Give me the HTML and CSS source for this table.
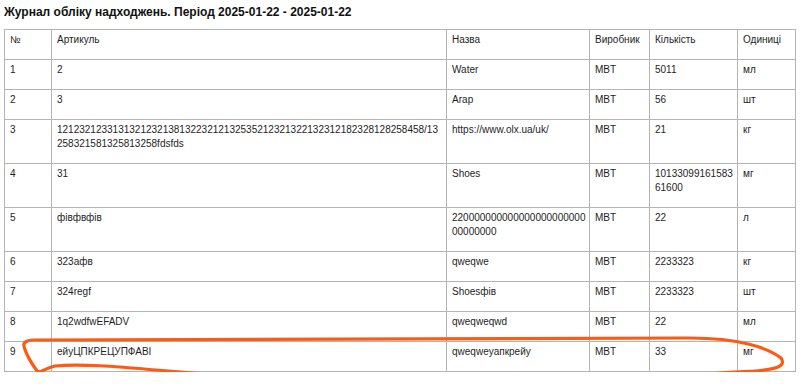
FILE: index.html
```html
<!DOCTYPE html>
<html lang="uk">
<head>
<meta charset="utf-8">
<title>Журнал обліку надходжень</title>
<link rel="stylesheet" href="styles.css">
</head>
<body>
<div class="page">
  <h1 class="title">Журнал обліку надходжень. Період 2025-01-22 - 2025-01-22</h1>
  <table class="journal">
    <colgroup>
      <col class="c-no"><col class="c-art"><col class="c-name"><col class="c-maker"><col class="c-qty"><col class="c-unit">
    </colgroup>
    <thead>
      <tr><th>№</th><th>Артикуль</th><th>Назва</th><th>Виробник</th><th>Кількість</th><th>Одиниці</th></tr>
    </thead>
    <tbody>
      <tr><td>1</td><td>2</td><td>Water</td><td>MBT</td><td>5011</td><td>мл</td></tr>
      <tr><td>2</td><td>3</td><td>Агар</td><td>MBT</td><td>56</td><td>шт</td></tr>
      <tr><td>3</td><td>121232123313132123213813223212132535212321322132312182328128258458/13258321581325813258fdsfds</td><td>https://www.olx.ua/uk/</td><td>MBT</td><td>21</td><td>кг</td></tr>
      <tr><td>4</td><td>31</td><td>Shoes</td><td>MBT</td><td>1013309916158361600</td><td>мг</td></tr>
      <tr><td>5</td><td>фівфвфів</td><td>22000000000000000000000000000000</td><td>MBT</td><td>22</td><td>л</td></tr>
      <tr><td>6</td><td>323афв</td><td>qweqwe</td><td>MBT</td><td>2233323</td><td>кг</td></tr>
      <tr><td>7</td><td>324regf</td><td>Shoesфів</td><td>MBT</td><td>2233323</td><td>шт</td></tr>
      <tr><td>8</td><td>1q2wdfwEFADV</td><td>qweqweqwd</td><td>MBT</td><td>22</td><td>мл</td></tr>
      <tr><td>9</td><td>ейуЦПКРЕЦУПФАВІ</td><td>qweqweyапкрейу</td><td>MBT</td><td>33</td><td>мг</td></tr>
    </tbody>
  </table>
</div>
<svg class="scribble" width="803" height="384" viewBox="0 0 803 384" aria-hidden="true">
  <path d="M 33 340 C 120 338, 400 340, 690 338 C 740 338, 768 348, 781 358 C 788 368, 770 371, 735 372 C 712 373, 696 376, 680 378 C 600 382, 400 382, 250 377 C 160 372, 95 362, 55 366 C 46 368, 42 372, 38 372 C 32 365, 25 352, 24 346 C 23 342, 28 340, 33 340" fill="none" stroke="#ff5a14" stroke-width="3.2" stroke-linecap="round" stroke-linejoin="round"/>
</svg>
</body>
</html>
```

FILE: styles.css
```css
html, body {
  margin: 0;
  padding: 0;
  background: #ffffff;
}

body {
  position: relative;
  font-family: "Liberation Sans", Arial, sans-serif;
  color: #1e1e1e;
}

.page {
  padding: 5px 0 0 4px;
}

.title {
  margin: 0 0 10px 0;
  font-size: 12px;
  line-height: 14px;
  font-weight: bold;
  color: #111;
}

.journal {
  border-collapse: collapse;
  table-layout: fixed;
  width: 792px;
  font-size: 10px;
  line-height: 14px;
}

.journal th,
.journal td {
  border: 1px solid #b4b4b4;
  padding: 3px 3px 12px 5px;
  text-align: left;
  vertical-align: top;
  font-weight: normal;
  word-break: break-all;
}

.c-no { width: 47px; }
.c-art { width: 395px; }
.c-name { width: 143px; }
.c-maker { width: 60px; }
.c-qty { width: 88px; }
.c-unit { width: 58px; }

.scribble {
  position: absolute;
  left: 0;
  top: 0;
  pointer-events: none;
}
```
